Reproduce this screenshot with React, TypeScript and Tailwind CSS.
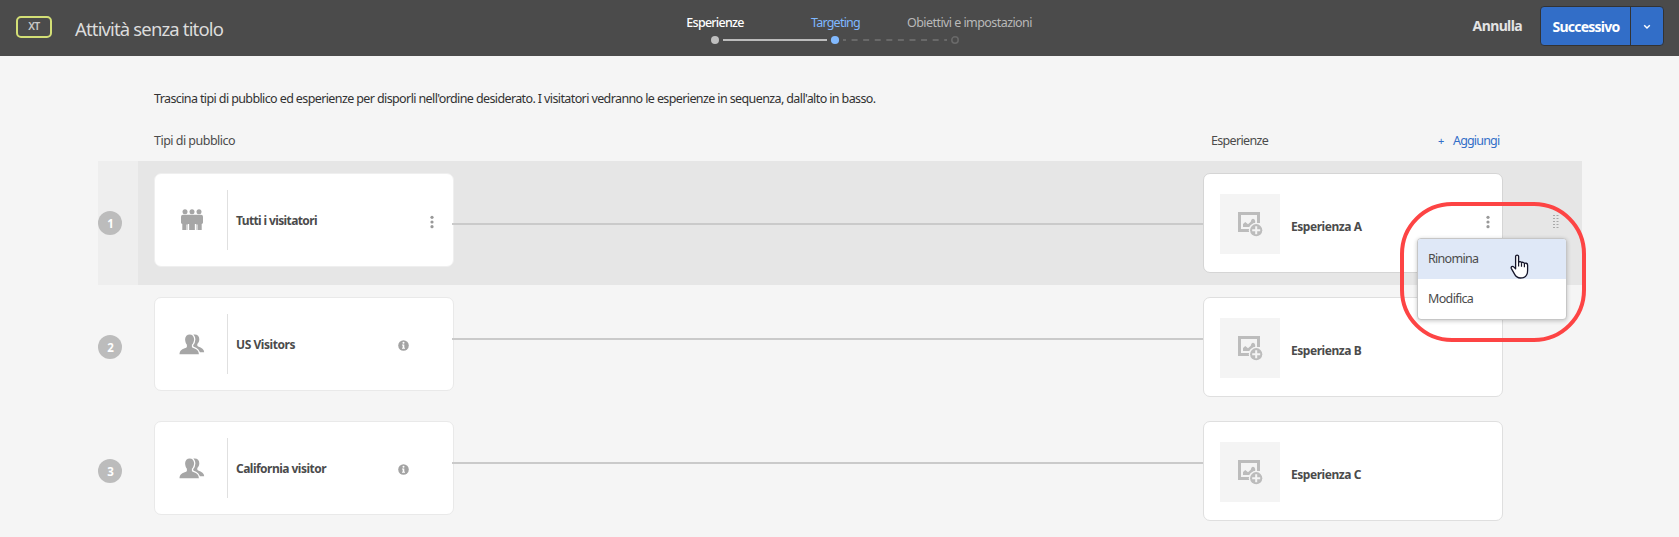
import type { ReactNode } from 'react';

function GroupIcon() {
  return (
    <svg width="24" height="22" viewBox="0 0 24 22" fill="#a6a6a6">
      <circle cx="5" cy="2.700" r="2.500" />
      <circle cx="12" cy="2.700" r="2.500" />
      <circle cx="19" cy="2.700" r="2.500" />
      <path d="M3 5.800h18a2 2 0 0 1 2 2v5.400c0 1-.6 1.500-1.300 1.700V21h-4.200v-5.500h-1V21h-0.900l-.5 0h-5.200V21H7.500v-5.500h-1V21H2.300v-6.100C1.600 14.700 1 14.200 1 13.200V7.800a2 2 0 0 1 2-2z" />
      <path d="M8.500 15v6M15.500 15v6" stroke="#fff" strokeWidth="1.300" fill="none" />
    </svg>
  );
}

function PeopleIcon() {
  return (
    <svg width="26" height="21" viewBox="0 0 26 21" fill="#a6a6a6">
      <path d="M14.300.6c3.600-.8 6 1.300 6 4.600 0 2-.8 3.700-2 4.800v1.500c0 .5.300.8.800 1 3.700 1.200 5.900 2.600 6.100 5.800h-8l-4-8z" />
      <path
        d="M10.700.4c2.600 0 4.400 2 4.400 4.900 0 2.200-.9 4.200-2.200 5.500v1.900c0 .5.300.8.800 1 3.600 1.200 6.100 2.500 6.200 6.600H.5c.1-4.100 2.800-5.400 6.600-6.600.5-.2.800-.5.800-1v-1.900C6.900 9.600 6.100 7.500 6.100 5.300c0-2.900 2-4.900 4.600-4.900z"
        stroke="#fff"
        strokeWidth="2.600"
      />
      <path d="M10.700.4c2.600 0 4.400 2 4.400 4.900 0 2.200-.9 4.200-2.200 5.500v1.900c0 .5.300.8.800 1 3.600 1.200 6.100 2.500 6.200 6.600H.5c.1-4.100 2.800-5.400 6.600-6.600.5-.2.800-.5.800-1v-1.900C6.900 9.600 6.100 7.500 6.100 5.300c0-2.900 2-4.900 4.600-4.900z" />
    </svg>
  );
}

function ImageAddIcon() {
  return (
    <svg width="25" height="25" viewBox="0 0 25 25">
      <path d="M11 18.500H1.500V1.500h19V11" fill="none" stroke="#bcbcbc" strokeWidth="3" />
      <path d="M5 15v-3l2.300-2 2.700 2.300 2.800-2.600c.3-1.800 1.200-2.900 2.200-2.900s1.700.8 2.200 2.200v1.800l-4.400 2.400L11.300 15z" fill="#bcbcbc" />
      <circle cx="18.200" cy="18.200" r="7.400" fill="#f4f4f4" />
      <circle cx="18.200" cy="18.200" r="6.100" fill="#bcbcbc" />
      <path d="M18.200 14.200v8M14.200 18.200h8" stroke="#f4f4f4" strokeWidth="2" />
    </svg>
  );
}

function InfoIcon() {
  return (
    <svg width="11" height="11" viewBox="0 0 11 11">
      <circle cx="5.500" cy="5.500" r="5.300" fill="#a3a3a3" />
      <circle cx="5.500" cy="2.800" r="1" fill="#fff" />
      <path d="M4 4.600h2.300v3.200H7v.9H4v-.9h.7V5.500H4z" fill="#fff" />
    </svg>
  );
}

function MoreIcon() {
  return (
    <svg width="4" height="14" viewBox="0 0 4 14" fill="#999">
      <circle cx="2" cy="2.300" r="1.600" />
      <circle cx="2" cy="7" r="1.600" />
      <circle cx="2" cy="11.700" r="1.600" />
    </svg>
  );
}

function HandCursor() {
  return (
    <svg width="20" height="26" viewBox="0 0 20 26">
      <path
        d="M5.600 2.600c0-2.100 3-2.100 3 0v6c.3-1.400 2.800-1.200 2.900.4.500-1.200 2.800-.9 2.900.7.600-1 3.200-.6 3.200 1.200v5.600c0 4.500-2.500 7.500-7.200 7.500-3.400 0-4.700-1.600-6-4.100l-3-5.300c-.9-1.700 1.100-2.900 2.300-1.700l1.900 2z"
        fill="#fff"
        stroke="#15152a"
        strokeWidth="1.300"
        strokeLinejoin="round"
      />
      <path d="M8.600 8.500v4M11.500 9.200v3.600M14.400 10v3.200" stroke="#15152a" strokeWidth="1.200" />
    </svg>
  );
}

function Header() {
  return (
    <header className="flex h-14 items-start bg-[#4b4b4b]">
      <div className="flex w-[655px] items-start">
        <div className="mt-4 ml-4 flex h-[22px] w-9 items-center justify-center rounded-[5px] border-2 border-[#d3df76] text-[10.5px] font-semibold tracking-[-0.6px] text-[#c8c8c8]">
          XT
        </div>
        <h1 className="mt-[15px] ml-[23px] text-[18.5px] leading-7 font-normal tracking-[-0.85px] text-[#dcdcdc]">
          Attività senza titolo
        </h1>
      </div>
      <nav className="flex flex-1 flex-col pt-3.5">
        <div className="grid grid-cols-[120px_120px_auto] text-[12.5px] leading-[18px] whitespace-nowrap">
          <span className="text-center font-medium tracking-[-0.75px] text-white">Esperienze</span>
          <span className="pl-px text-center tracking-[-0.76px] text-[#7fb8ff]">Targeting</span>
          <span className="pl-3 tracking-[-0.56px] text-[#b9b9b9]">Obiettivi e impostazioni</span>
        </div>
        <svg className="mt-[3px] ml-14" width="250" height="10" viewBox="0 0 250 10">
          <circle cx="4" cy="5" r="4" fill="#bfbfbf" />
          <path d="M12 5h104" stroke="#bcbcbc" strokeWidth="2" />
          <circle cx="124" cy="5" r="4.100" fill="#82baff" />
          <path d="M132 5h104" stroke="#696969" strokeWidth="2" strokeDasharray="6 5.580" strokeDashoffset="3" />
          <circle cx="244" cy="5" r="3.200" fill="none" stroke="#696969" strokeWidth="1.600" />
        </svg>
      </nav>
      <div className="flex items-start pr-[15px] text-[14px] font-bold">
        <button className="mt-4 mr-[18px] leading-5 tracking-[-0.62px] text-[#e3e3e3]">Annulla</button>
        <div className="mt-1.5 flex h-10 w-[124px] overflow-hidden rounded border border-[#333] bg-[#326ec8] text-white">
          <button className="flex w-[90px] items-center justify-center border-r border-[#333] pl-px tracking-[-0.78px]">
            Successivo
          </button>
          <button className="flex flex-1 items-center justify-center pt-0.5">
            <svg width="8" height="6" viewBox="0 0 8 6">
              <path d="M1.200 1.300 4 4l2.800-2.700" fill="none" stroke="#fff" strokeWidth="1.500" />
            </svg>
          </button>
        </div>
      </div>
    </header>
  );
}

function Menu() {
  return (
    <div className="absolute top-[64px] left-[213px] z-20 w-[150px] rounded-[4px] border border-[#c6c6c6] bg-white text-[12.5px] text-[#4b4b4b] shadow-[0_1px_4px_rgba(0,0,0,0.22)]">
      <div className="flex h-10 items-center rounded-t-[3px] bg-[#dfe8f7] pt-px pl-2.5 tracking-[-0.72px]">Rinomina</div>
      <div className="flex h-10 items-center pt-px pl-2.5 tracking-[-0.64px]">Modifica</div>
      <div className="absolute top-[15px] left-[92px]">
        <HandCursor />
      </div>
      <div className="absolute top-[-37px] left-[-18px] h-[140px] w-[186px] rounded-[52px] border-4 border-[#fd4444]" />
    </div>
  );
}

type RowProps = {
  index: number;
  audience: ReactNode;
  experience: ReactNode;
  active?: boolean;
};

function Row({ index, audience, experience, active }: RowProps) {
  return (
    <div className="ml-[98px] flex h-[124px] w-[1484px]">
      <div className={active ? 'w-10 bg-[#eee] pt-[50px]' : 'w-10 pt-[50px]'}>
        <div className="flex size-6 items-center justify-center rounded-full bg-[#bcbcbc] pt-px pl-px text-[11.5px] font-bold text-white">
          {index}
        </div>
      </div>
      <div className={active ? 'flex flex-1 items-start bg-[#e6e6e6] pl-4' : 'flex flex-1 items-start pl-4'}>
        <div
          className={
            active
              ? 'mt-3 flex h-[94px] w-[300px] items-start rounded-[7px] border border-[#efefef] bg-white'
              : 'mt-3 flex h-[94px] w-[300px] items-start rounded-[7px] border border-[#e9e9e9] bg-white'
          }
        >
          <div className="mt-4 flex h-[60px] w-[73px] items-center justify-center border-r border-[#e0e0e0] pl-px">
            {active ? <GroupIcon /> : <PeopleIcon />}
          </div>
          <div className="mt-[38px] ml-2 flex-1 text-[12px] leading-[18px] font-bold text-[#4b4b4b]">{audience}</div>
          {active ? (
            <div className="mt-[41px] mr-[19px]">
              <MoreIcon />
            </div>
          ) : (
            <div className="mt-[42px] mr-11">
              <InfoIcon />
            </div>
          )}
        </div>
        <div className={active ? 'mt-[62px] -ml-0.5 h-0.5 w-[752px] bg-[#cacaca]' : 'mt-[53px] -ml-0.5 h-0.5 w-[752px] bg-[#cacaca]'} />
        <div
          className={
            active
              ? 'relative -ml-px mt-3 flex h-[100px] w-[300px] items-start rounded-[7px] border border-[#d5d5d5] bg-white'
              : 'relative -ml-px mt-3 flex h-[100px] w-[300px] items-start rounded-[7px] border border-[#dfdfdf] bg-white'
          }
        >
          <div className="mt-5 ml-4 flex size-[60px] items-start bg-[#f4f4f4] pt-[18px] pl-[18px]">
            <ImageAddIcon />
          </div>
          <div className="mt-11 ml-[11px] flex-1 text-[12px] leading-[18px] font-bold tracking-[-0.45px] text-[#4b4b4b]">
            {experience}
          </div>
          {active && (
            <div className="mt-[41px] mr-3">
              <MoreIcon />
            </div>
          )}
          {active && <Menu />}
        </div>
        {active && (
          <svg className="mt-[53px] ml-[50px]" width="6" height="14" viewBox="0 0 6 14">
            <path d="M1 .98v13M4.500.98v13" stroke="#a8a8a8" strokeWidth="2" strokeDasharray="1 2" />
          </svg>
        )}
      </div>
    </div>
  );
}

export default function App() {
  return (
    <div className="h-[537px] w-[1679px] overflow-hidden bg-[#f5f5f5] font-['Noto_Sans','Open_Sans',sans-serif]">
      <Header />
      <main>
        <p className="pt-[33px] pl-[154px] text-[12.5px] leading-5 tracking-[-0.61px] text-[#323232]">
          Trascina tipi di pubblico ed esperienze per disporli nell'ordine desiderato. I visitatori vedranno le esperienze in
          sequenza, dall'alto in basso.
        </p>
        <div className="flex h-[52px] pt-[22px] pl-[154px] text-[12.5px] leading-5 text-[#4b4b4b]">
          <span className="w-[1057px] tracking-[-0.52px]">Tipi di pubblico</span>
          <span className="w-[227px] tracking-[-0.67px]">Esperienze</span>
          <span className="w-[15px] text-[11px] leading-[19px] text-[#326ec8]">+</span>
          <span className="tracking-[-0.83px] text-[#326ec8]">Aggiungi</span>
        </div>
        <Row index={1} active audience={<span className="tracking-[-0.62px]">Tutti i visitatori</span>} experience="Esperienza A" />
        <Row index={2} audience={<span className="tracking-[-0.44px]">US Visitors</span>} experience="Esperienza B" />
        <Row index={3} audience={<span className="tracking-[-0.52px]">California visitor</span>} experience="Esperienza C" />
      </main>
    </div>
  );
}
